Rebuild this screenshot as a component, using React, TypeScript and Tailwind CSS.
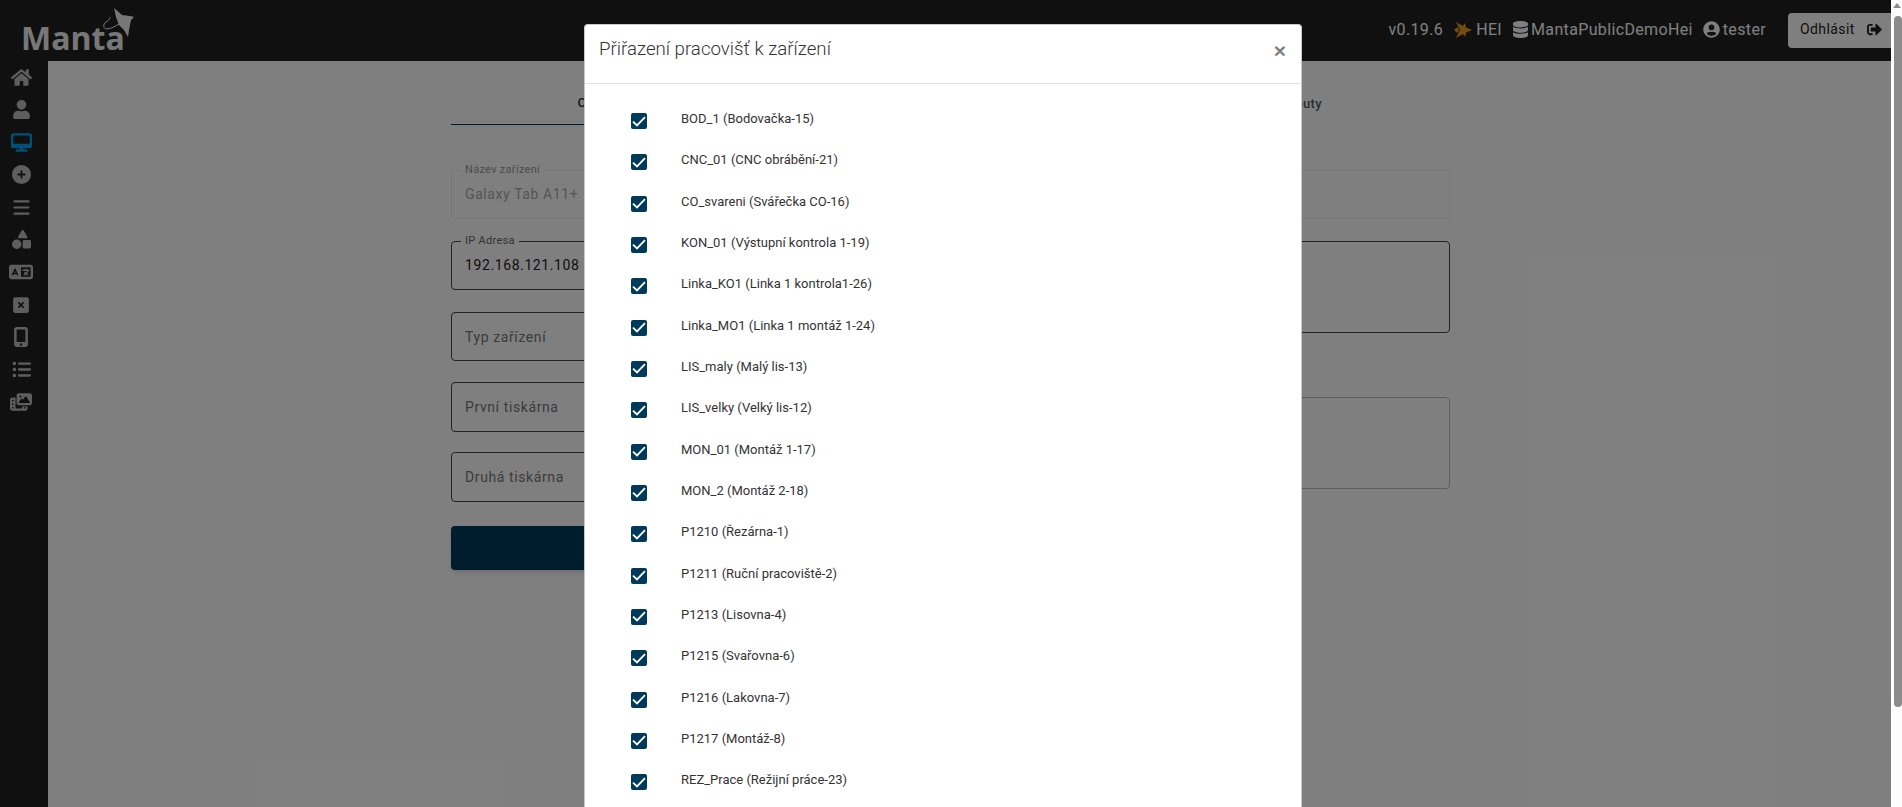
import { FaDatabase, FaHome, FaSignOutAlt, FaUser, FaUserCircle } from "react-icons/fa";
import { FaCirclePlus, FaDesktop, FaLanguage, FaListUl, FaMobileScreenButton, FaPhotoFilm, FaShapes, FaSquareXmark } from "react-icons/fa6";
import { Menu } from "lucide-react";

const roboto = "font-['Roboto',sans-serif]";

const workplaces = [
    "BOD_1 (Bodovačka-15)",
    "CNC_01 (CNC obrábění-21)",
    "CO_svareni (Svářečka CO-16)",
    "KON_01 (Výstupní kontrola 1-19)",
    "Linka_KO1 (Linka 1 kontrola1-26)",
    "Linka_MO1 (Linka 1 montáž 1-24)",
    "LIS_maly (Malý lis-13)",
    "LIS_velky (Velký lis-12)",
    "MON_01 (Montáž 1-17)",
    "MON_2 (Montáž 2-18)",
    "P1210 (Řezárna-1)",
    "P1211 (Ruční pracoviště-2)",
    "P1213 (Lisovna-4)",
    "P1215 (Svařovna-6)",
    "P1216 (Lakovna-7)",
    "P1217 (Montáž-8)",
    "REZ_Prace (Režijní práce-23)",
];

const navIcons = [
    { icon: FaHome, size: 21 },
    { icon: FaUser, size: 19 },
    { icon: FaDesktop, size: 21, active: true },
    { icon: FaCirclePlus, size: 19 },
    { icon: Menu, size: 21, strokeWidth: 2.4 },
    { icon: FaShapes, size: 19 },
    { icon: FaLanguage, size: 24 },
    { icon: FaSquareXmark, size: 18 },
    { icon: FaMobileScreenButton, size: 20 },
    { icon: FaListUl, size: 19 },
    { icon: FaPhotoFilm, size: 22 },
];

const Logo = () => (
    <div className="relative h-[61px] w-[48px] shrink-0">
        <span className="absolute left-[21px] top-[15px] font-['Open_Sans',sans-serif] text-[32px] font-bold leading-[45px] text-[#eeeeee]">Manta</span>
        <svg className="absolute left-[100px] top-[4px]" width="40" height="38" viewBox="100 4 40 38" fill="#eeeeee">
            <path d="M114 8 L122 15 L130 16 L134 17 L131 20 L129 30 L128 37 L124 30 L119 25 L116 17 Z" />
            <path d="M119 24 C114 27 110 29 106 29 C103 28 103 24 106 22 C108 21 110 19 110 17" fill="none" stroke="#eeeeee" strokeWidth="1" />
        </svg>
    </div>
);

const Field = ({ label, value, disabled, dark, className }: { label?: string; value?: string; disabled?: boolean; dark?: boolean; className?: string }) => (
    <fieldset className={`rounded-[4px] border px-[9px] ${disabled ? "border-[#eeeeee]" : dark ? "border-[#444444]" : "border-[#bbbbbb]"} ${className ?? ""}`}>
        {label && <legend className={`px-[4px] text-[11px] leading-[10px] tracking-[0.3px] ${disabled ? "text-[#999999]" : "text-[#666666]"}`}>{label}</legend>}
        {value && <div className={`pl-[4px] text-[14px] leading-[20px] tracking-[0.6px] ${label ? "pt-[9px]" : "pt-[14px]"} ${disabled ? "text-[#aaaaaa]" : label ? "text-[#212121]" : "text-[#777777]"}`}>{value}</div>}
    </fieldset>
);

const Form = () => (
    <div className={`ml-[403px] w-[999px] pt-[1px] ${roboto}`}>
        <div className="grid h-[63px] grid-cols-3 text-[13px] font-medium tracking-[0.4px]">
            <div className="flex items-center justify-center border-b border-[#003a5b] pl-[4px] pt-[20px] text-[#003a5b]">Obecné údaje</div>
            <div className="flex items-center justify-center pt-[20px] text-[#555555]">Pracoviště</div>
            <div className="flex items-center justify-center pr-[5px] pt-[20px] text-[#555555]">Další atributy</div>
        </div>
        <div className="mt-[45px] grid grid-cols-2 gap-x-[20px]">
            <div className="flex flex-col">
                <Field label="Název zařízení" value="Galaxy Tab A11+" disabled className="h-[54px] -mt-[5px]" />
                <Field label="IP Adresa" value="192.168.121.108" dark className="mt-[17px] h-[54px]" />
                <Field value="Typ zařízení" dark className="mt-[22px] h-[49px]" />
                <Field value="První tiskárna" dark className="mt-[21px] h-[50px]" />
                <Field value="Druhá tiskárna" dark className="mt-[20px] h-[50px]" />
                <div className="mt-[24px] h-[44px] rounded-[4px] bg-[#003a5b] shadow-md" />
            </div>
            <div className="flex flex-col">
                <Field disabled className="h-[49px]" />
                <Field dark className="mt-[22px] h-[92px]" />
                <Field className="mt-[64px] h-[92px]" />
            </div>
        </div>
    </div>
);

const Modal = () => (
    <div className={`ml-[584px] mt-[24px] h-[783px] w-[718px] overflow-hidden rounded-t-[4px] border-x border-t border-[#c9c9c9] bg-white ${roboto}`}>
        <div className="flex h-[59px] items-start justify-between border-b border-[#dee2e6] pl-[14px] pr-[15px]">
            <h5 className="pt-[9px] text-[18.7px] font-light leading-[30px] text-[#333333]">Přiřazení pracovišť k zařízení</h5>
            <span className="pt-[14px] font-['Liberation_Sans',sans-serif] text-[21px] font-bold leading-[24px] text-[#808080]">×</span>
        </div>
        <ul className="pt-[26px]">
            {workplaces.map((name) => (
                <li key={name} className="flex h-[41.33px] items-start pl-[46px]">
                    <span className="mt-[3px] flex h-[16px] w-[16px] shrink-0 items-center justify-center rounded-[2px] bg-[#003a5b]">
                        <svg width="14" height="11" viewBox="0 0 14 11" fill="none" stroke="#ffffff" strokeWidth="1.8">
                            <path d="M1 5.6 L5 9.4 L13 1.2" />
                        </svg>
                    </span>
                    <span className="ml-[34px] text-[13px] leading-[18px] text-[#333333]">{name}</span>
                </li>
            ))}
        </ul>
    </div>
);

const App: React.FC = () => {
    return (
        <div className="flex h-screen overflow-hidden bg-[#fdfdfd]">
            <div className="relative min-w-0 flex-1 bg-white">
                <header className={`flex h-[61px] items-center bg-[#212121] ${roboto}`}>
                    <Logo />
                    <div className="ml-auto flex items-center pb-[2px] text-[16px] tracking-[0.35px] text-white">
                        <span>v0.19.6</span>
                        <svg className="ml-[11px]" width="18" height="16" viewBox="0 0 18 16" fill="#e89a1c">
                            <path d="M2 0 L9 4 L11 1 L12 5.5 L18 8 L12 10.5 L11 15 L9 12 L2 16 L6 8 Z" />
                            <path d="M0 8 L3.5 5 L5 8 L3.5 11 Z" />
                        </svg>
                        <span className="ml-[4px]">HEI</span>
                        <FaDatabase size={17} className="ml-[10px]" />
                        <span className="ml-[2px]">MantaPublicDemoHei</span>
                        <FaUserCircle size={17} className="ml-[10px]" />
                        <span className="ml-[3px]">tester</span>
                    </div>
                    <button className="ml-[22px] flex h-[35px] w-[103px] items-center rounded-l-[4px] bg-white pb-[2px] pl-[12px] text-[14px] tracking-[0.4px] text-[#212121]">
                        Odhlásit
                        <FaSignOutAlt size={15} className="ml-[12px]" />
                    </button>
                </header>
                <div className="flex h-[746px]">
                    <nav className="flex h-full w-[48px] shrink-0 flex-col items-center bg-[#212121]">
                        {navIcons.map(({ icon: Icon, size, active, strokeWidth }, i) => (
                            <div key={i} className={`flex h-[32.5px] w-full items-center justify-center pr-[6px] ${active ? "text-[#00a0f0]" : "text-[#bdbdbd]"}`}>
                                <Icon size={size} strokeWidth={strokeWidth} />
                            </div>
                        ))}
                    </nav>
                    <Form />
                </div>
                <div className="absolute inset-0 bg-black/50">
                    <Modal />
                </div>
            </div>
            <div className="flex w-[11px] shrink-0 flex-col items-center">
                <div className="mt-[3px] h-0 w-0 border-x-[4px] border-b-[5px] border-x-transparent border-b-[#8b8b8b]" />
                <div className="ml-[3px] mt-[8px] h-[691px] w-[8px] rounded-[4px] bg-[#8b8b8b]" />
            </div>
        </div>
    );
};

export default App;
